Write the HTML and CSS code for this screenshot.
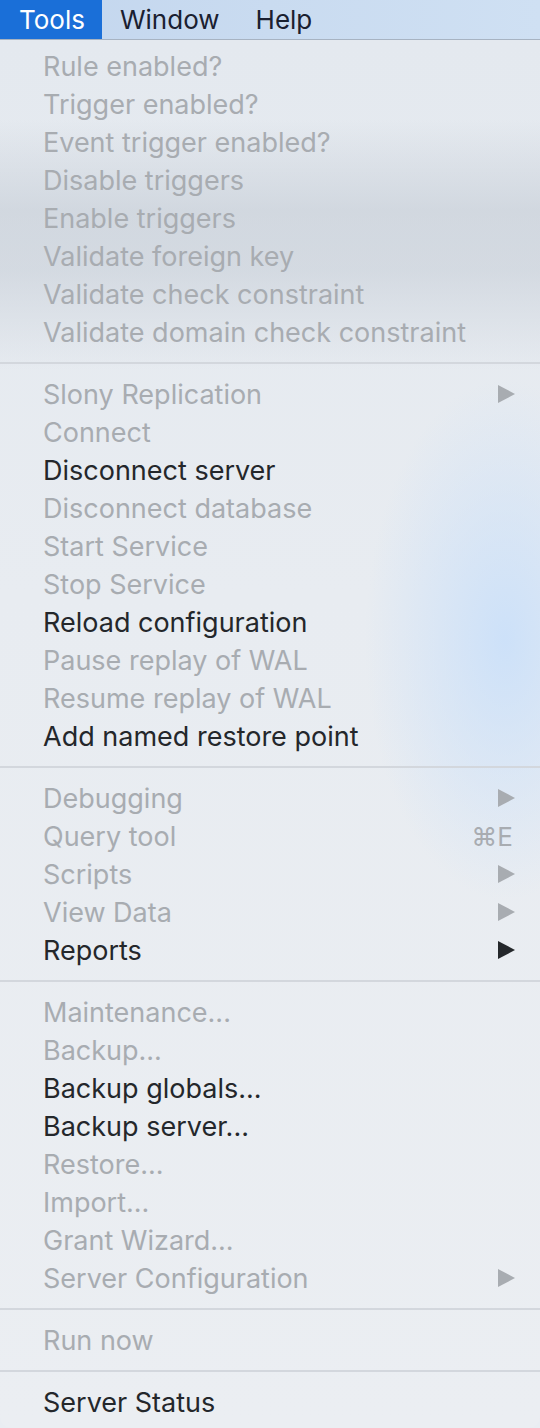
FILE: index.html
```html
<!DOCTYPE html>
<html>
    <head>
        <meta name="viewport" content="width=device-width, initial-scale=1">
        <link rel="stylesheet" href="styles.css">
    </head>
<body>
    <!-- Menu bar -->
    <div class="menubar">
        <span class="menutitle active">Tools</span>
        <span class="menutitle">Window</span>
        <span class="menutitle">Help</span>
    </div>

    <!-- Tools menu -->
    <div class="menu">
        <div class="group">
            <div class="item off"><span>Rule enabled?</span></div>
            <div class="item off"><span>Trigger enabled?</span></div>
            <div class="item off"><span>Event trigger enabled?</span></div>
            <div class="item off"><span>Disable triggers</span></div>
            <div class="item off"><span>Enable triggers</span></div>
            <div class="item off"><span>Validate foreign key</span></div>
            <div class="item off"><span>Validate check constraint</span></div>
            <div class="item off"><span>Validate domain check constraint</span></div>
        </div>
        <div class="sep"></div>
        <div class="group">
            <div class="item off"><span>Slony Replication</span><i class="arrow"></i></div>
            <div class="item off"><span>Connect</span></div>
            <div class="item"><span>Disconnect server</span></div>
            <div class="item off"><span>Disconnect database</span></div>
            <div class="item off"><span>Start Service</span></div>
            <div class="item off"><span>Stop Service</span></div>
            <div class="item"><span>Reload configuration</span></div>
            <div class="item off"><span>Pause replay of WAL</span></div>
            <div class="item off"><span>Resume replay of WAL</span></div>
            <div class="item"><span>Add named restore point</span></div>
        </div>
        <div class="sep"></div>
        <div class="group">
            <div class="item off"><span>Debugging</span><i class="arrow"></i></div>
            <div class="item off"><span>Query tool</span><span class="key">&#8984;E</span></div>
            <div class="item off"><span>Scripts</span><i class="arrow"></i></div>
            <div class="item off"><span>View Data</span><i class="arrow"></i></div>
            <div class="item"><span>Reports</span><i class="arrow"></i></div>
        </div>
        <div class="sep"></div>
        <div class="group">
            <div class="item off"><span>Maintenance...</span></div>
            <div class="item off"><span>Backup...</span></div>
            <div class="item"><span>Backup globals...</span></div>
            <div class="item"><span>Backup server...</span></div>
            <div class="item off"><span>Restore...</span></div>
            <div class="item off"><span>Import...</span></div>
            <div class="item off"><span>Grant Wizard...</span></div>
            <div class="item off"><span>Server Configuration</span><i class="arrow"></i></div>
        </div>
        <div class="sep"></div>
        <div class="group">
            <div class="item off"><span>Run now</span></div>
        </div>
        <div class="sep"></div>
        <div class="group">
            <div class="item"><span>Server Status</span></div>
        </div>
    </div>
</body>
</html>
```

FILE: styles.css
```css
/* Page */
html, body {
    margin: 0;
    padding: 0;
}
body {
    width: 540px;
    height: 1428px;
    overflow: hidden;
    background-color: #e9edf2;
    font-family: Inter, "Liberation Sans", sans-serif;
    -webkit-font-smoothing: antialiased;
}

/* Menu bar */
.menubar {
    height: 40px;
    display: flex;
    align-items: stretch;
    background: linear-gradient(90deg, #c3d6ee 0%, #c9dbf0 50%, #cfe0f3 100%);
    border-bottom: 1px solid #a7b3c2;
    box-sizing: border-box;
}
.menutitle {
    display: flex;
    align-items: center;
    padding: 0 18px;
    font-size: 26px;
    color: #1a2030;
}
.menutitle.active {
    background-color: #1a6fd8;
    color: #ffffff;
    padding: 0 17px 0 19px;
}

/* Dropdown */
.menu {
    height: 1388px;
    padding-top: 7px;
    box-sizing: border-box;
    border-radius: 0 0 10px 10px;
    background:
        radial-gradient(ellipse 140px 260px at 505px 600px, rgba(200, 223, 250, 0.85), rgba(200, 223, 250, 0) 100%),
        linear-gradient(180deg, rgba(0,0,0,0) 80px, rgba(190, 198, 208, 0.5) 170px, rgba(190, 198, 208, 0.45) 230px, rgba(0,0,0,0) 330px),
        linear-gradient(180deg, #e4e9ef 0%, #e8ecf1 40%, #ebeef2 100%);
}
.item {
    height: 38px;
    display: flex;
    align-items: center;
    padding: 0 25px 0 43px;
    font-size: 27px;
    color: #24272b;
}
.item > span:first-child {
    flex: 1;
}
.item.off {
    color: #a8acb1;
}
.key {
    font-size: 26px;
    padding-right: 2px;
}
.arrow {
    width: 0;
    height: 0;
    border-top: 9px solid transparent;
    border-bottom: 9px solid transparent;
    border-left: 17px solid #24272b;
}
.item.off .arrow {
    border-left-color: #a8acb1;
}
.sep {
    height: 24px;
    display: flex;
    align-items: center;
}
.sep::before {
    content: "";
    display: block;
    width: 100%;
    height: 2px;
    background-color: #d3d7dd;
}
```
